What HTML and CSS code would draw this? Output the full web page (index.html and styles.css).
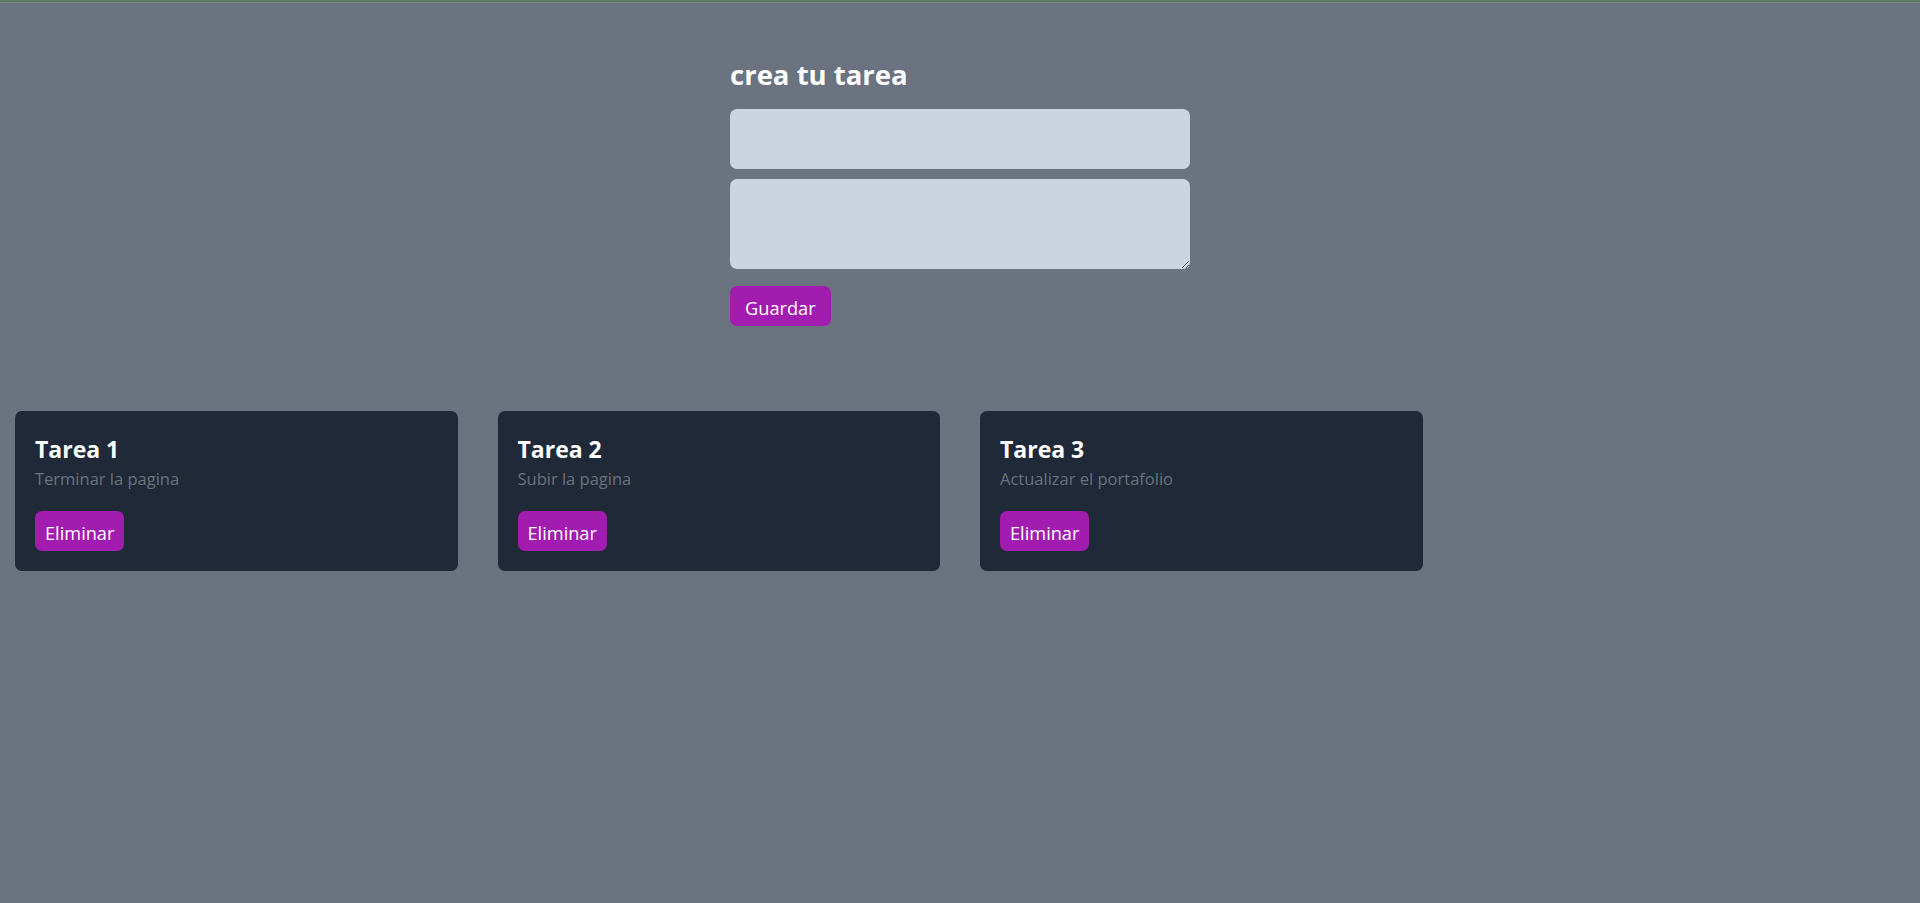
FILE: index.html
```html
<!DOCTYPE html>
<html lang="es">
<head>
<meta charset="utf-8">
<title>Tareas</title>
<link rel="stylesheet" href="styles.css">
</head>
<body>
<div class="topline"></div>
<main class="page">
  <form class="task-form">
    <h1 class="form-title">crea tu tarea</h1>
    <input class="field field-input" type="text">
    <textarea class="field field-area"></textarea>
    <button type="button" class="btn btn-save">Guardar</button>
  </form>
  <section class="task-grid">
    <div class="card">
      <h2 class="card-title">Tarea 1</h2>
      <p class="card-desc">Terminar la pagina</p>
      <button type="button" class="btn btn-delete">Eliminar</button>
    </div>
    <div class="card">
      <h2 class="card-title">Tarea 2</h2>
      <p class="card-desc">Subir la pagina</p>
      <button type="button" class="btn btn-delete">Eliminar</button>
    </div>
    <div class="card">
      <h2 class="card-title">Tarea 3</h2>
      <p class="card-desc">Actualizar el portafolio</p>
      <button type="button" class="btn btn-delete">Eliminar</button>
    </div>
  </section>
</main>
</body>
</html>
```
FILE: styles.css
```css
* { box-sizing: border-box; }
html, body {
  margin: 0;
  padding: 0;
  background: #6b7280;
  min-height: 100%;
}
body {
  font-family: "Open Sans", "Noto Sans", sans-serif;
  color: #ffffff;
}
.topline {
  height: 3px;
  background: #5b7a60;
  border-bottom: 1px solid #75857a;
}
.page {
  padding-top: 53px;
}
.task-form {
  width: 460px;
  margin: 0 auto;
  display: flex;
  flex-direction: column;
  align-items: flex-start;
}
.form-title {
  margin: 1px 0 16px 0;
  font-size: 27.5px;
  line-height: 36px;
  font-weight: 700;
  color: #ffffff;
}
.field {
  display: block;
  width: 100%;
  background: #cbd5e1;
  border: none;
  border-radius: 7px;
  margin: 0;
  padding: 10px 12px;
  font-family: inherit;
  font-size: 18px;
  outline: none;
}
.field-input {
  height: 60px;
  margin-bottom: 10px;
}
.field-area {
  height: 90px;
  resize: vertical;
}
.btn {
  border: none;
  border-radius: 7px;
  background: #a21caf;
  color: #ffffff;
  font-family: inherit;
  font-size: 18.2px;
  height: 40px;
  line-height: 34px;
  padding: 5px 10px 1px;
  cursor: pointer;
}
.btn-save {
  margin-top: 17px;
  padding-left: 15px;
  padding-right: 15px;
}
.task-grid {
  margin-top: 85px;
  padding: 0 15px;
  display: grid;
  grid-template-columns: repeat(4, 1fr);
  column-gap: 40px;
}
.card {
  background: #1f2937;
  border-radius: 7px;
  padding: 20px;
  display: flex;
  flex-direction: column;
  align-items: flex-start;
}
.card-title {
  margin: 0;
  font-size: 23px;
  line-height: 36px;
  font-weight: 700;
  color: #ffffff;
}
.card-desc {
  margin: 0;
  font-size: 16.5px;
  line-height: 23px;
  color: #6b7280;
}
.btn-delete {
  margin-top: 21px;
}
```
